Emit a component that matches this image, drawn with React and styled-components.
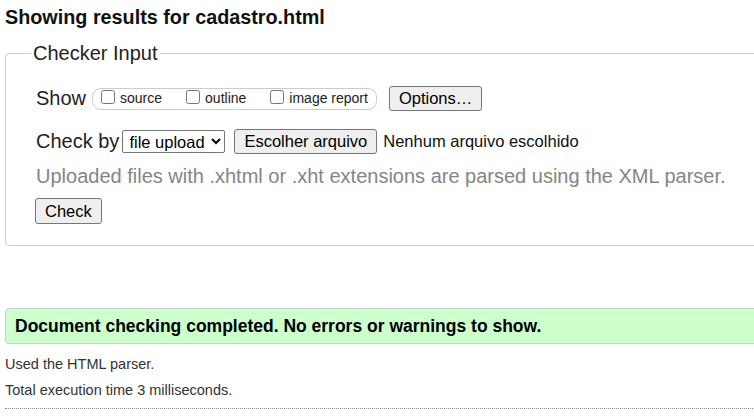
import React, {useState} from 'react'
import styled, {createGlobalStyle} from 'styled-components'

const Global = createGlobalStyle`
html, body {
  margin: 0;
  padding: 0;
  background: #fff;
  overflow: hidden;
}
body {
  font-family: "Liberation Sans", Arial, sans-serif;
  color: #222;
}
`

const Page = styled.div`
width: 1100px;
padding: 0 5px;
`

const Heading = styled.h2`
margin: 0;
padding-top: 5px;
font-size: 19.8px;
line-height: 24px;
font-weight: bold;
color: #111;
`

const Fieldset = styled.fieldset`
margin: 13px 0 0 0;
padding: 0 0 21px 25px;
border: 1px solid #ccc;
border-radius: 4px;
`

const Legend = styled.legend`
padding: 0 2px;
font-size: 20px;
line-height: 23px;
color: #222;
`

const Row = styled.div`
display: flex;
align-items: center;
height: ${p => p.h || 25}px;
margin-left: 5px;
margin-top: ${p => p.top || 0}px;
font-size: 20px;
line-height: 23px;
`

const Word = styled.span`
margin-right: ${p => p.mr}px;
`

const Group = styled.span`
display: inline-flex;
align-items: center;
height: 20px;
padding: 0 8px;
border: 1px solid #ccc;
border-radius: 9px;
gap: 24px;
`

const Opt = styled.label`
display: inline-flex;
align-items: center;
gap: 5px;
font-size: 14px;
color: #222;
`

const Box = styled.input`
width: 14px;
height: 14px;
margin: 0 0 3px 0;
`

const Button = styled.button`
font-family: "Liberation Sans", Arial, sans-serif;
font-size: 16.5px;
height: ${p => p.h || 25}px;
padding: 0 9px;
margin: 0 0 0 ${p => p.ml || 0}px;
background: #efefef;
border: 1px solid #767676;
border-radius: 3px;
color: #000;
`

const Select = styled.select`
font-family: "Liberation Sans", Arial, sans-serif;
font-size: 16.5px;
height: 23px;
width: 103px;
padding: 0 0 0 2px;
margin: 0;
background: #fff;
border: 1px solid #767676;
border-radius: 2px;
color: #000;
`

const FileName = styled.span`
margin-left: 6px;
font-size: 16.5px;
color: #111;
`

const Hint = styled.p`
margin: 11px 0 0 5px;
font-size: 20px;
line-height: 23px;
color: #858585;
`

const Success = styled.div`
margin-top: 62px;
height: 34px;
display: flex;
align-items: center;
padding-left: 9px;
background: #ccffcc;
border: 1px solid #ccc;
border-radius: 4px;
font-size: 17.5px;
font-weight: bold;
color: #000;
`

const Note = styled.p`
margin: ${p => p.top}px 0 0 0;
font-size: 14.5px;
line-height: 17px;
color: #333;
`

const Rule = styled.hr`
margin: 9px 0 0 0;
border: 0;
border-top: 1px dotted #888;
`

export default function App() {
  const [mode, setMode] = useState('file')

  return (
    <Page>
      <Global />
      <Heading>Showing results for cadastro.html</Heading>

      <Fieldset>
        <Legend>Checker Input</Legend>

        <Row top={21}>
          <Word mr={6}>Show</Word>
          <Group>
            <Opt><Box type="checkbox" />source</Opt>
            <Opt><Box type="checkbox" />outline</Opt>
            <Opt><Box type="checkbox" />image report</Opt>
          </Group>
          <Button ml={12}>Options…</Button>
        </Row>

        <Row top={18}>
          <Word mr={3}>Check by</Word>
          <Select value={mode} onChange={e => setMode(e.target.value)}>
            <option value="address">address</option>
            <option value="file">file upload</option>
            <option value="text">text input</option>
          </Select>
          <Button ml={9}>Escolher arquivo</Button>
          <FileName>Nenhum arquivo escolhido</FileName>
        </Row>

        <Hint>Uploaded files with .xhtml or .xht extensions are parsed using the XML parser.</Hint>

        <Row top={10} h={26}>
          <Button h={26} ml={-1}>Check</Button>
        </Row>
      </Fieldset>

      <Success>Document checking completed. No errors or warnings to show.</Success>

      <Note top={12}>Used the HTML parser.</Note>
      <Note top={9}>Total execution time 3 milliseconds.</Note>
      <Rule />
    </Page>
  )
}
